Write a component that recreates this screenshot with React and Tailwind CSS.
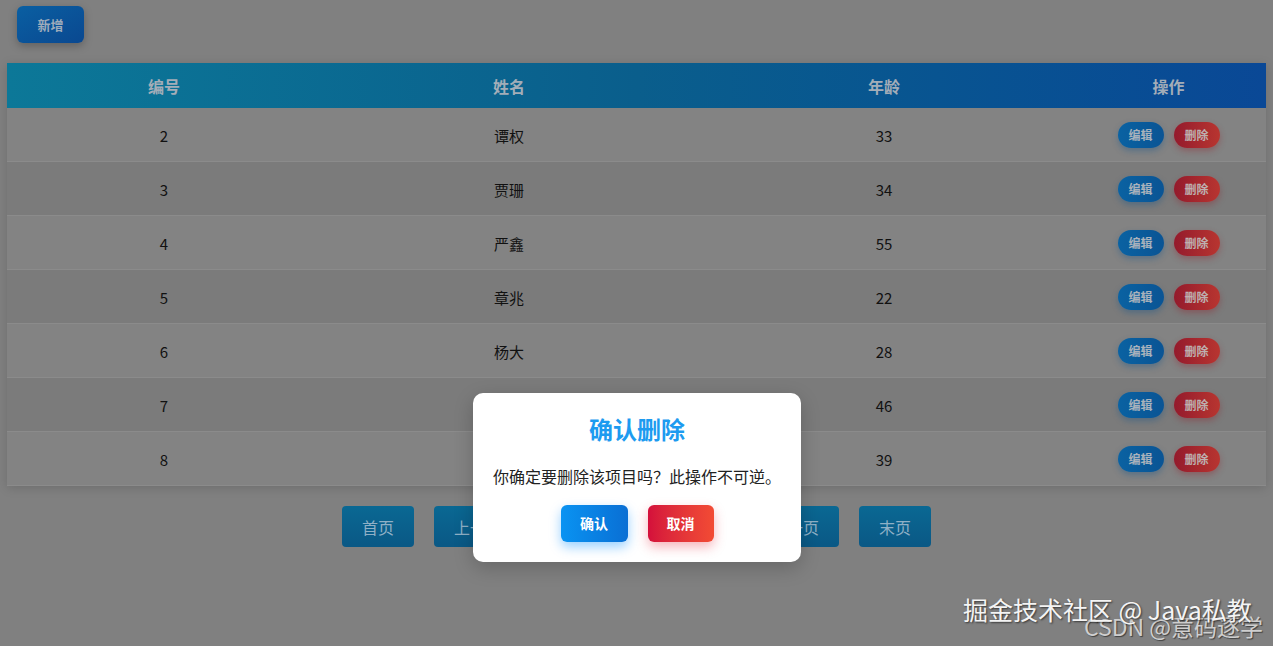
import React from "react";

const rows = [
  [2, "谭权", 33],
  [3, "贾珊", 34],
  [4, "严鑫", 55],
  [5, "章兆", 22],
  [6, "杨大", 28],
  [7, "", 46],
  [8, "", 39],
];

export default function App() {
  return (
    <div
      className="relative w-full h-[646px] overflow-hidden bg-[#808080]"
      style={{ fontFamily: '"Noto Sans CJK SC", "Noto Sans", sans-serif' }}
    >
      <div className="pt-[6px] px-[7px]">
        <button className="ml-[10px] w-[67px] h-[37px] rounded-[6px] bg-gradient-to-br from-[#0a5fa2] to-[#0a4890] text-[13px] font-bold text-[#9eabbb] shadow-[0_3px_8px_rgba(0,0,0,0.25)]">
          新增
        </button>

        <div className="mt-[20px] w-[1259px] shadow-[0_2px_10px_rgba(0,0,0,0.15)]">
          <div className="grid grid-cols-[314px_376px_374px_195px] h-[45px] items-center bg-gradient-to-r from-[#0c7898] via-[#0a5e8c] to-[#0a4896] text-[16px] font-bold text-[#a3adb8]">
            <div className="text-center">编号</div>
            <div className="text-center">姓名</div>
            <div className="text-center">年龄</div>
            <div className="text-center">操作</div>
          </div>
          {rows.map((r, i) => (
            <div
              key={r[0]}
              className={`grid grid-cols-[314px_376px_374px_195px] h-[54px] items-center text-[15px] text-[#111111] border-b border-[#8b8b8b] ${
                i % 2 === 0 ? "bg-[#838383]" : "bg-[#7b7b7b]"
              }`}
            >
              <div className="text-center pt-[3px]">{r[0]}</div>
              <div className="text-center pt-[3px]">{r[1]}</div>
              <div className="text-center pt-[3px]">{r[2]}</div>
              <div className="flex justify-center gap-[10px]">
                <button className="w-[46px] h-[26px] rounded-full bg-gradient-to-r from-[#0a62a2] to-[#0a5494] text-[12px] font-bold text-[#a9b2bc] shadow-[0_3px_6px_rgba(10,80,140,0.35)]">
                  编辑
                </button>
                <button className="w-[46px] h-[26px] rounded-full bg-gradient-to-r from-[#941a2c] to-[#b83530] text-[12px] font-bold text-[#bdb0b0] shadow-[0_3px_6px_rgba(150,30,40,0.35)]">
                  删除
                </button>
              </div>
            </div>
          ))}
        </div>

        <div className="mt-[20px] flex justify-center gap-[20px] text-[16px] text-[#8fb0c6]">
          <button className="w-[72px] h-[41px] rounded-[4px] bg-gradient-to-b from-[#0a6893] to-[#0a5885]">首页</button>
          <button className="w-[88px] h-[41px] rounded-[4px] bg-gradient-to-b from-[#0a6893] to-[#0a5885]">上一页</button>
          <span className="w-[189px] h-[41px] flex items-center justify-center text-[#333]">1 / 2</span>
          <button className="w-[88px] h-[41px] rounded-[4px] bg-gradient-to-b from-[#0a6893] to-[#0a5885]">下一页</button>
          <button className="w-[72px] h-[41px] rounded-[4px] bg-gradient-to-b from-[#0a6893] to-[#0a5885]">末页</button>
        </div>
      </div>

      <div className="absolute left-[473px] top-[393px] w-[328px] h-[169px] rounded-[10px] bg-white px-[20px] pt-[20px] pb-[20px] shadow-[0_6px_20px_rgba(0,0,0,0.2)]">
        <div className="h-[32px] leading-[32px] text-center text-[24px] font-bold text-[#1d9bf0]">确认删除</div>
        <div className="mt-[19px] h-[24px] leading-[24px] text-[16px] text-[#222222] whitespace-nowrap">
          你确定要删除该项目吗？此操作不可逆。
        </div>
        <div className="mt-[17px] flex justify-center gap-[20px]">
          <button className="w-[67px] h-[37px] rounded-[6px] bg-gradient-to-r from-[#0a93f2] to-[#0a6fd4] text-[14px] font-bold text-white shadow-[0_5px_12px_rgba(0,140,255,0.4)]">
            确认
          </button>
          <button className="w-[66px] h-[37px] rounded-[6px] bg-gradient-to-r from-[#d40f3b] to-[#f24b34] text-[14px] font-bold text-white shadow-[0_5px_12px_rgba(230,40,60,0.35)]">
            取消
          </button>
        </div>
      </div>

      <div className="absolute left-[1084px] top-[610px] text-[23px] leading-[32px] text-[#cfcfcf] whitespace-nowrap [text-shadow:1px_1px_1px_rgba(0,0,0,0.5)]">
        CSDN @意码逐学
      </div>
      <div className="absolute left-[963px] top-[592px] text-[25px] leading-[34px] text-[#f4f4f4] whitespace-nowrap [text-shadow:1px_1px_2px_rgba(0,0,0,0.6)]">
        掘金技术社区 @ Java私教
      </div>
    </div>
  );
}
